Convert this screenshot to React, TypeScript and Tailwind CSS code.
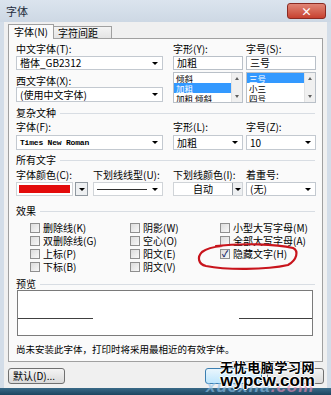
import React from 'react';

const cjk = "font-['Noto_Sans_CJK_SC','Noto_Sans',sans-serif]";

const Arrow: React.FC = () => (
    <span className="inline-block w-0 h-0 border-l-[3px] border-r-[3px] border-t-[3px] border-l-transparent border-r-transparent border-t-black" />
);

const Label: React.FC<{ text: string; k: string; colon?: string }> = ({ text, k, colon = ':' }) => (
    <div className="h-[12px] leading-[12px] text-[10px] text-black whitespace-nowrap">
        {`${text}(${k})${colon}`}
    </div>
);

const Combo: React.FC<{ value: string; w: string; h?: string; mono?: boolean }> = ({ value, w, h = 'h-[15px]', mono }) => (
    <div className={`${w} ${h} bg-white border border-[#c3c9d0] flex items-center justify-between pl-[3px] pr-[4px]`}>
        <span className={mono ? "font-['Liberation_Mono',monospace] text-[8px] font-bold tracking-[-0.2px]" : 'text-[10px] leading-[12px]'}>{value}</span>
        <Arrow />
    </div>
);

const Section: React.FC<{ title: string }> = ({ title }) => (
    <div className="h-[12px] flex items-center pr-[7px]">
        <span className="text-[10px] leading-[12px] mr-[4px]">{title}</span>
        <div className="flex-1 h-px bg-[#d8dde3]" />
    </div>
);

const ListBox: React.FC<{ items: string[]; sel: number }> = ({ items, sel }) => (
    <div className="w-[70px] h-[31px] bg-white border border-[#b9c0c8] flex mt-[2px] overflow-hidden">
        <div className="flex-1 flex flex-col">
            {items.map((it, i) => (
                <div key={it} className={`h-[10px] leading-[10px] text-[8.5px] pl-[2px] whitespace-nowrap ${i === sel ? 'bg-[#3399ff] text-white' : 'text-black'}`}>{it}</div>
            ))}
        </div>
        <div className="w-[11px] bg-[#f0f0f0] border-l border-[#e2e2e2] flex flex-col justify-between items-center py-[4px]">
            <span className="w-0 h-0 border-l-[2px] border-r-[2px] border-b-[3px] border-l-transparent border-r-transparent border-b-[#606060]" />
            <span className="w-0 h-0 border-l-[2px] border-r-[2px] border-t-[3px] border-l-transparent border-r-transparent border-t-[#606060]" />
        </div>
    </div>
);

const Check: React.FC<{ text: string; k: string; checked?: boolean }> = ({ text, k, checked }) => (
    <div className="h-[13px] flex items-center">
        <span className="w-[10px] h-[10px] border border-[#8f8f8f] bg-gradient-to-br from-[#dcdcdc] to-[#f8f8f8] flex items-center justify-center text-[9px] leading-none text-[#1a2a6a] font-bold">
            {checked ? '✓' : ''}
        </span>
        <span className="ml-[3px] text-[10px] leading-[12px] whitespace-nowrap">{`${text}(${k})`}</span>
    </div>
);

const outline = '[text-shadow:1px_0_#fff,-1px_0_#fff,0_1px_#fff,0_-1px_#fff]';

const App: React.FC = () => {
    return (
        <div className={`${cjk} relative w-[331px] h-[395px] overflow-hidden bg-[#d3dde8] flex flex-col text-black`}>
            {/* title bar */}
            <div className="h-[22px] flex items-center justify-between pl-[6px] pr-[5px] bg-gradient-to-b from-[#dbe4ee] to-[#cdd8e4]">
                <span className="text-[11px] text-[#1f2d3c]">字体</span>
                <div className="w-[39px] h-[16px] rounded-[3px] border border-[#8a2a22] bg-gradient-to-b from-[#e08576] to-[#c7402f] flex items-center justify-center text-white text-[11px] font-bold leading-none">
                    ×
                </div>
            </div>

            {/* dialog body */}
            <div className="flex-1 mx-[4px] bg-[#f0f0f0] flex flex-col">
                {/* tabs */}
                <div className="h-[16px] flex items-end pl-[4px]">
                    <div className="h-[15px] w-[46px] bg-[#fafafa] border border-b-0 border-[#a0a0a0] text-[10px] leading-[14px] pl-[5px] -mb-px z-10 relative">字体(N)</div>
                    <div className="h-[12px] w-[58px] bg-gradient-to-b from-[#f4f4f4] to-[#e4e4e4] border border-b-0 border-l-0 border-[#a0a0a0] text-[10px] leading-[12px] pl-[4px]">字符间距(R)</div>
                </div>

                {/* panel */}
                <div className="ml-[4px] w-[315px] h-[324px] border border-[#a0a0a0] bg-[#fafafa] pl-[7px] flex flex-col">
                    <div className="flex mt-[4px]">
                        <div className="w-[147px] flex flex-col">
                            <Label text="中文字体" k="T" />
                            <div className="mt-[1px]"><Combo value="楷体_GB2312" w="w-[147px]" h="h-[14px]" /></div>
                            <div className="mt-[5px]"><Label text="西文字体" k="X" /></div>
                            <Combo value="(使用中文字体)" w="w-[147px]" />
                        </div>
                        <div className="ml-[10px] w-[70px] flex flex-col">
                            <Label text="字形" k="Y" />
                            <div className="mt-[1px] h-[14px] bg-white border border-[#b9c0c8] text-[10px] leading-[12px] pl-[3px]">加粗</div>
                            <ListBox items={['倾斜', '加粗', '加粗 倾斜']} sel={1} />
                        </div>
                        <div className="ml-[3px] w-[70px] flex flex-col">
                            <Label text="字号" k="S" />
                            <div className="mt-[1px] h-[14px] bg-white border border-[#b9c0c8] text-[10px] leading-[12px] pl-[3px]">三号</div>
                            <ListBox items={['三号', '小三', '四号']} sel={0} />
                        </div>
                    </div>

                    <div className="mt-[4px]"><Section title="复杂文种" /></div>
                    <div className="flex mt-[2px]">
                        <div className="w-[147px]"><Label text="字体" k="F" /></div>
                        <div className="ml-[10px] w-[70px]"><Label text="字形" k="L" /></div>
                        <div className="ml-[3px] w-[70px]"><Label text="字号" k="Z" /></div>
                    </div>
                    <div className="flex mt-[2px]">
                        <Combo value="Times New Roman" w="w-[147px]" mono />
                        <div className="ml-[10px]"><Combo value="加粗" w="w-[70px]" /></div>
                        <div className="ml-[3px]"><Combo value="10" w="w-[70px]" /></div>
                    </div>

                    <div className="mt-[4px]"><Section title="所有文字" /></div>
                    <div className="flex mt-[3px]">
                        <div className="w-[77px]"><Label text="字体颜色" k="C" /></div>
                        <div className="w-[80px]"><Label text="下划线线型" k="U" /></div>
                        <div className="w-[73px]"><Label text="下划线颜色" k="I" /></div>
                        <div className="h-[12px] leading-[12px] text-[10px]">着重号:</div>
                    </div>
                    <div className="flex mt-[1px] h-[14px]">
                        <div className="w-[77px] flex">
                            <div className="w-[57px] h-[14px] bg-white border border-[#d0d4d8] p-[2px]">
                                <div className="w-full h-full bg-[#e30b0b]" />
                            </div>
                            <div className="ml-[2px] w-[13px] h-[14px] border border-[#9098a0] bg-[#eef0f2] flex items-center justify-center"><Arrow /></div>
                        </div>
                        <div className="w-[70px] h-[14px] bg-white border border-[#d0d4d8] flex items-center justify-between pl-[3px] pr-[4px]">
                            <div className="w-[50px] h-px bg-[#303030]" />
                            <Arrow />
                        </div>
                        <div className="ml-[10px] w-[70px] h-[14px] bg-white border border-[#d0d4d8] flex">
                            <div className="flex-1 text-center text-[10px] leading-[12px]">自动</div>
                            <div className="w-[10px] border-l border-[#9098a0] bg-[#eef0f2] flex items-center justify-center"><Arrow /></div>
                        </div>
                        <div className="ml-[3px]"><Combo value="(无)" w="w-[70px]" h="h-[14px]" /></div>
                    </div>

                    <div className="mt-[9px]"><Section title="效果" /></div>
                    <div className="mt-[4px] ml-[14px] grid grid-cols-[100px_90px_1fr]">
                        <div className="flex flex-col">
                            <Check text="删除线" k="K" />
                            <Check text="双删除线" k="G" />
                            <Check text="上标" k="P" />
                            <Check text="下标" k="B" />
                        </div>
                        <div className="flex flex-col">
                            <Check text="阴影" k="W" />
                            <Check text="空心" k="O" />
                            <Check text="阳文" k="E" />
                            <Check text="阴文" k="V" />
                        </div>
                        <div className="flex flex-col">
                            <Check text="小型大写字母" k="M" />
                            <Check text="全部大写字母" k="A" />
                            <Check text="隐藏文字" k="H" checked />
                        </div>
                    </div>

                    <div className="mt-[5px]"><Section title="预览" /></div>
                    <div className="ml-px w-[296px] h-[46px] border border-[#7a7a7a] bg-white flex items-end justify-between pb-[16px]">
                        <div className="w-[75px] h-px bg-[#404040]" />
                        <div className="w-[73px] h-px bg-[#404040]" />
                    </div>
                    <div className="mt-[7px] text-[9.5px] leading-[12px] whitespace-nowrap">尚未安装此字体，打印时将采用最相近的有效字体。</div>
                </div>

                {/* buttons */}
                <div className="mt-[6px] flex pl-[4px] pr-[3px]">
                    <div className="w-[57px] h-[16px] rounded-[3px] border border-[#707070] bg-gradient-to-b from-[#f4f4f4] to-[#dadada] text-[10px] leading-[14px] pl-[4px]">默认(D)...</div>
                    <div className="flex-1" />
                    <div className="w-[57px] h-[16px] rounded-[3px] border border-[#3c7fb1] bg-gradient-to-b from-[#eaf6fd] to-[#bee6fd]" />
                    <div className="ml-[5px] w-[57px] h-[16px] rounded-[3px] border border-[#707070] bg-gradient-to-b from-[#f4f4f4] to-[#dadada]" />
                </div>
            </div>

            <div className="h-[7px] bg-gradient-to-b from-[#3a6a88] to-[#1c4560]" />

            {/* hand-drawn red mark over the checked box */}
            <svg className="absolute left-[196px] top-[242px]" width="104" height="29" viewBox="0 0 104 29">
                <path d="M20 4 C45 1 80 2 97 6 C103 9 101 18 92 23 C70 28 30 28 10 24 C2 22 1 15 6 10 C10 7 16 5 26 4" fill="none" stroke="#c8141c" strokeWidth="2.2" strokeLinecap="round" />
            </svg>

            {/* faint site mark */}
            <div className="absolute left-[206px] top-[378px] font-['Liberation_Sans',sans-serif] italic font-bold text-[17px] leading-none opacity-60 tracking-[1px] whitespace-nowrap">
                <span className="text-[#8ec3ea]">xuexila</span><span className="text-[#f08cb4]">.com</span>
            </div>

            {/* watermark */}
            <div className="absolute left-[220px] top-[360px] flex flex-col items-center">
                <div className={`text-[13px] leading-[14px] font-bold tracking-[0.6px] text-black ${outline}`}>无忧电脑学习网</div>
                <div className={`font-['Liberation_Sans',sans-serif] text-[17px] leading-[13px] font-bold text-black ${outline}`}>wypcw.com</div>
            </div>
        </div>
    );
};

export default App;
